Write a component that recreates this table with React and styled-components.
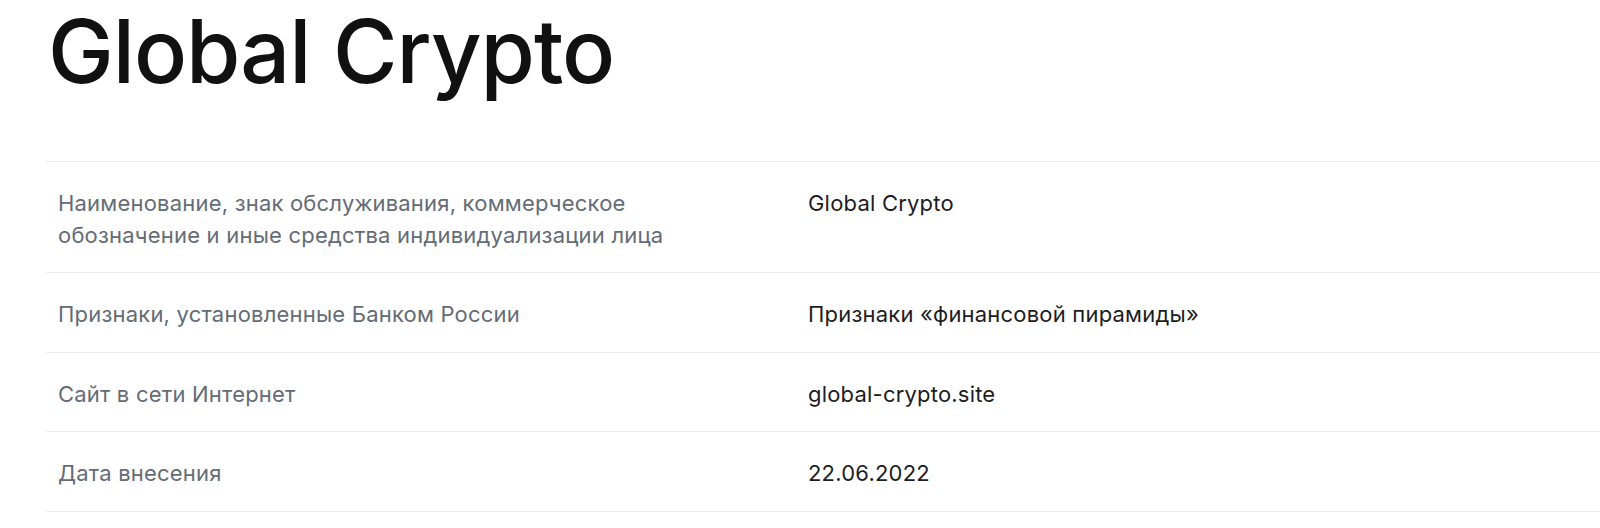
import React from "react";
import styled, { createGlobalStyle } from "styled-components";

const GlobalStyle = createGlobalStyle`
    body {
        margin : 0;
        background : #ffffff;
        font-family : Inter, "Noto Sans", sans-serif;
    }
`
const Page = styled.div`
    padding : 3px 0 0 46px;
`
const Title = styled.h1`
    margin : 0 0 61px 2px;
    font-size : 88px;
    font-weight : 500;
    line-height : 1.1;
    letter-spacing : -1px;
    color : #111112;
`
const Table = styled.div`
    display : grid;
    grid-template-columns : 750px 1fr;
    border-bottom : 1px solid #ebebeb;
`
const Cell = styled.div`
    padding : 25px ${props => props.$label ? "90px" : "12px"} 21.5px 12px;
    border-top : 1px solid #ebebeb;
    font-size : 22px;
    line-height : 32px;
    letter-spacing : 0.2px;
    color : ${props => props.$label ? "#646c76" : "#1d1d1f"};
`

const rows = [
    { label : "Наименование, знак обслуживания, коммерческое обозначение и иные средства индивидуализации лица", value : "Global Crypto" },
    { label : "Признаки, установленные Банком России", value : "Признаки «финансовой пирамиды»" },
    { label : "Сайт в сети Интернет", value : "global-crypto.site" },
    { label : "Дата внесения", value : "22.06.2022" },
];

const App = () => {
    return(
        <Page>
            <GlobalStyle />
            <Title>Global Crypto</Title>
            <Table>
                {rows.map(row => (
                    <React.Fragment key={row.label}>
                        <Cell $label>{row.label}</Cell>
                        <Cell>{row.value}</Cell>
                    </React.Fragment>
                ))}
            </Table>
        </Page>
    );
}

export default App;
